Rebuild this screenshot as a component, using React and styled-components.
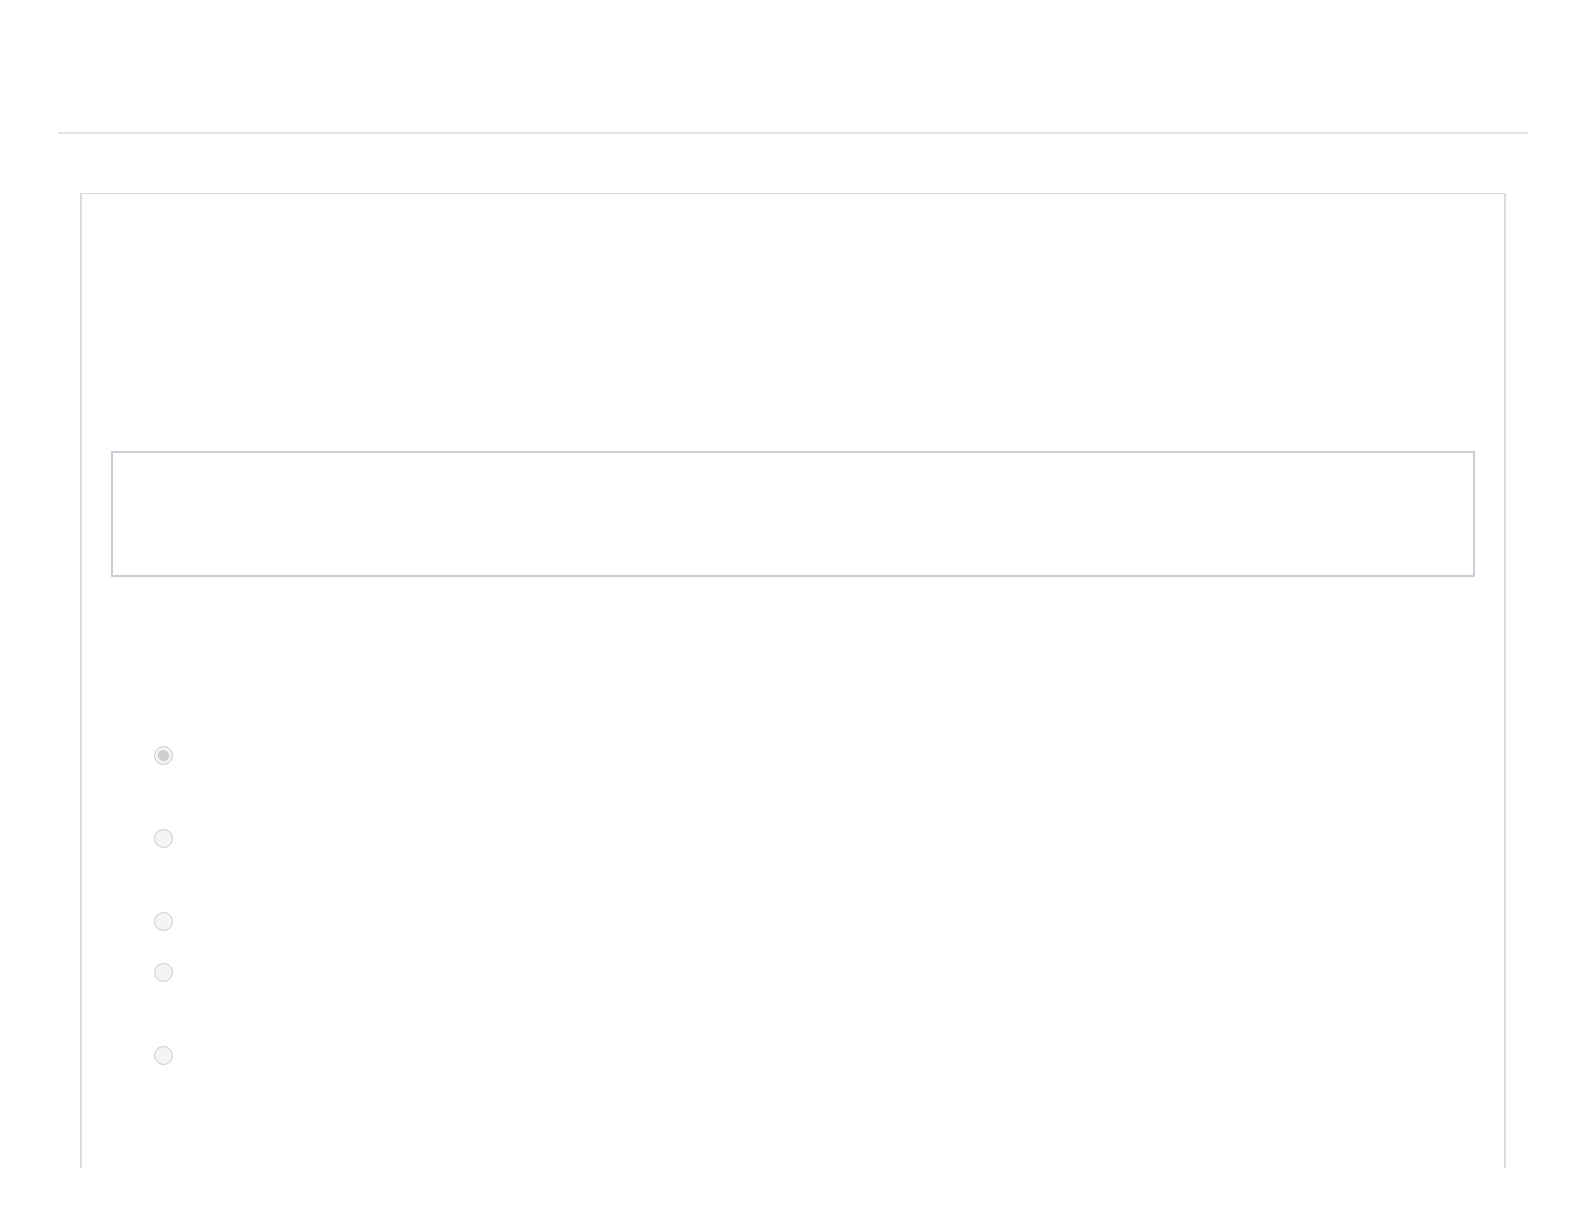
import React from 'react'
import styled, { createGlobalStyle } from 'styled-components'

const GlobalStyle = createGlobalStyle`
  html, body {
    margin: 0;
    padding: 0;
    background: #ffffff;
    font-family: "Liberation Sans", Arial, sans-serif;
  }
`;

const Page = styled.div`
  display: flex;
  flex-direction: column;
  height: 1224px;
  overflow: hidden;
`;

const Header = styled.header`
  height: 132px;
  margin: 0 56px 0 58px;
  border-bottom: 2px solid #e6e2e4;
`;

const Card = styled.main`
  margin: 59px 78px 0 80px;
  height: 975px;
  border: 1px solid #dcdcdc;
  border-left-width: 2px;
  border-right-width: 2px;
  border-bottom: none;
  padding: 257px 29px 0 29px;
  box-sizing: border-box;
`;

const TextBox = styled.div`
  height: 126px;
  border: 2px solid #c9ced6;
  box-sizing: border-box;
`;

const Options = styled.ul`
  list-style: none;
  margin: 169px 0 0 43px;
  padding: 0;
  display: flex;
  flex-direction: column;
`;

const Option = styled.li`
  display: flex;
  align-items: flex-start;
  height: ${p => (p.$tall ? 83 : 51)}px;
`;

const Radio = styled.span`
  width: 19px;
  height: 19px;
  border-radius: 50%;
  border: 1.5px solid #cbcbcb;
  background: #f4f4f4;
  box-sizing: border-box;
  display: flex;
  align-items: center;
  justify-content: center;
  &::after {
    content: '';
    width: 11px;
    height: 11px;
    border-radius: 50%;
    background: ${p => (p.$checked ? '#cccccc' : 'transparent')};
  }
`;

const options = [
  { checked: true, tall: true },
  { checked: false, tall: true },
  { checked: false, tall: false },
  { checked: false, tall: true },
  { checked: false, tall: true },
];

export default function App() {
  return (
    <Page>
      <GlobalStyle />
      <Header />
      <Card>
        <TextBox />
        <Options>
          {options.map((o, i) => (
            <Option key={i} $tall={o.tall}>
              <Radio $checked={o.checked} />
            </Option>
          ))}
        </Options>
      </Card>
    </Page>
  )
}
